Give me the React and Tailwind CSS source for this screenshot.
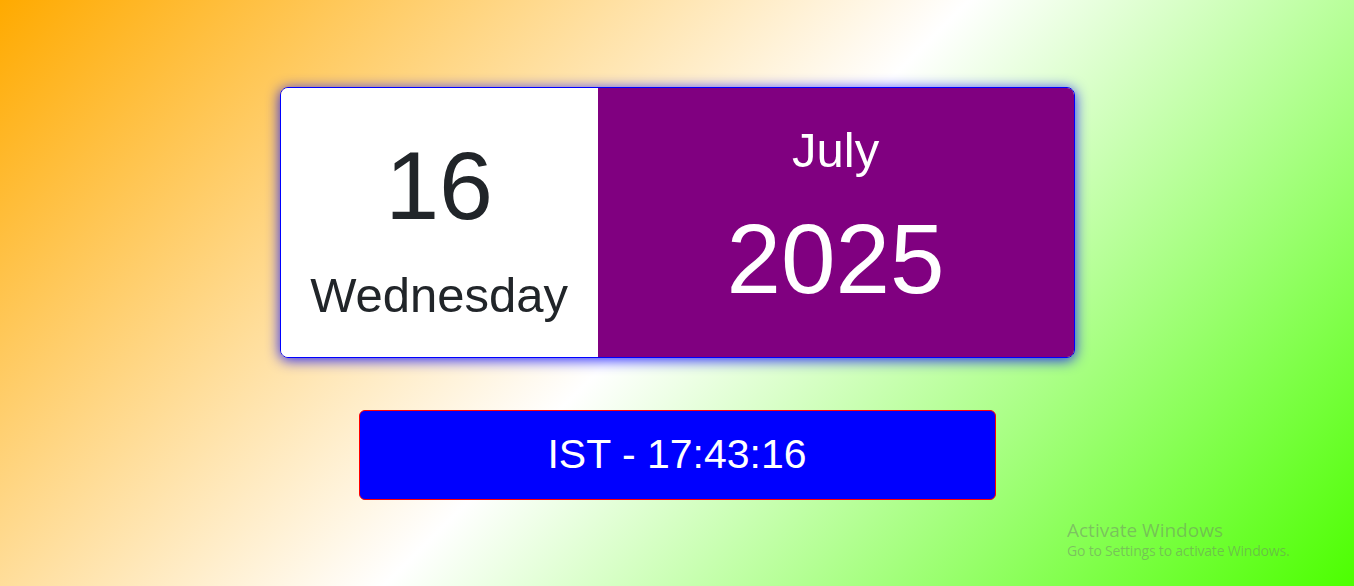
import React from "react";

const date = { day: "16", weekday: "Wednesday", month: "July", year: "2025" };
const time = "IST - 17:43:16";

export default function App() {
  return (
    <div
      className="relative h-[586px] w-full overflow-hidden bg-[linear-gradient(135deg,#ffaa00_0%,#ffffff_50%,#4cff00_100%)]"
      style={{ fontFamily: '"Liberation Sans", Arial, sans-serif' }}
    >
      <div className="flex flex-col items-center pt-[87px]">
        {/* Date card */}
        <div className="flex w-[795px] h-[271px] border border-[#0000ff] rounded-lg overflow-hidden shadow-[0_2px_14px_rgba(0,0,255,0.85)]">
          <div className="w-[40%] bg-white flex flex-col items-center text-[#212529] pt-[49px]">
            <div className="text-[97px] leading-[97px]">{date.day}</div>
            <div className="text-[49px] leading-[49px] mt-[37px]">{date.weekday}</div>
          </div>
          <div className="flex-1 bg-[#800080] flex flex-col items-center text-white pt-[38px]">
            <div className="text-[49px] leading-[48px]">{date.month}</div>
            <div className="text-[98px] leading-[96px] mt-[37px]">{date.year}</div>
          </div>
        </div>

        {/* Clock */}
        <div className="mt-[52px] w-[637px] h-[90px] bg-[#0000ff] border border-[#ff0000] rounded-md flex items-center justify-center text-white text-[41px]">
          {time}
        </div>
      </div>

      {/* Windows watermark */}
      <div
        className="absolute left-[1067px] top-[518px] text-[rgba(110,120,110,0.45)]"
        style={{ fontFamily: '"Open Sans", "Noto Sans", sans-serif' }}
      >
        <div className="text-[19px] leading-[24px]">Activate Windows</div>
        <div className="text-[14px] leading-[18px] tracking-[-0.2px]">Go to Settings to activate Windows.</div>
      </div>
    </div>
  );
}
